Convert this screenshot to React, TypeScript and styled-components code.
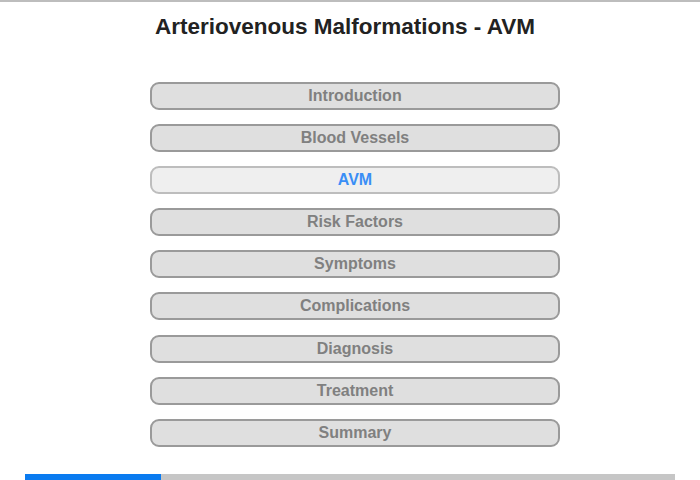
import styled, { createGlobalStyle } from 'styled-components';

const GlobalStyle = createGlobalStyle`
    html, body {
        margin: 0;
        padding: 0;
        background: #fff;
    }
    body {
        font-family: "Liberation Sans", Arial, sans-serif;
    }
`;

const Page = styled.div`
    width: 700px;
    height: 480px;
    box-sizing: border-box;
    border-top: 2px solid #bdbdbd;
    display: flex;
    flex-direction: column;
    align-items: center;
    overflow: hidden;
`;

const Title = styled.h1`
    margin: 13px 10px 0 0;
    height: 24px;
    line-height: 24px;
    font-size: 22.5px;
    font-weight: bold;
    color: #222;
`;

const Menu = styled.nav`
    margin: 43px 0 0 10px;
    display: flex;
    flex-direction: column;
    gap: 14.1px;
`;

const MenuButton = styled.button<{ $active?: boolean }>`
    width: 410px;
    height: 28px;
    box-sizing: border-box;
    border: 2px solid ${(p) => (p.$active ? '#bdbdbd' : '#9a9a9a')};
    border-radius: 9px;
    background: ${(p) => (p.$active ? '#efefef' : '#dfdfdf')};
    color: ${(p) => (p.$active ? '#3a8ef6' : '#808080')};
    font-family: "Liberation Sans", Arial, sans-serif;
    font-size: 16px;
    font-weight: bold;
    padding: 0;
    cursor: pointer;
`;

const Progress = styled.div`
    margin-top: auto;
    margin-bottom: 0;
    width: 650px;
    height: 6px;
    background: #c6c6c6;
    display: flex;
`;

const ProgressFill = styled.div`
    height: 100%;
    background: #0a7bf0;
`;

const items = [
    'Introduction',
    'Blood Vessels',
    'AVM',
    'Risk Factors',
    'Symptoms',
    'Complications',
    'Diagnosis',
    'Treatment',
    'Summary',
];

export default function App() {
    const current = 2;
    const done = 136 / 650;
    return (
        <>
            <GlobalStyle />
            <Page>
                <Title>Arteriovenous Malformations - AVM</Title>
                <Menu>
                    {items.map((label, i) => (
                        <MenuButton key={label} $active={i === current}>
                            {label}
                        </MenuButton>
                    ))}
                </Menu>
                <Progress>
                    <ProgressFill style={{ width: `${done * 100}%` }} />
                </Progress>
            </Page>
        </>
    );
}
